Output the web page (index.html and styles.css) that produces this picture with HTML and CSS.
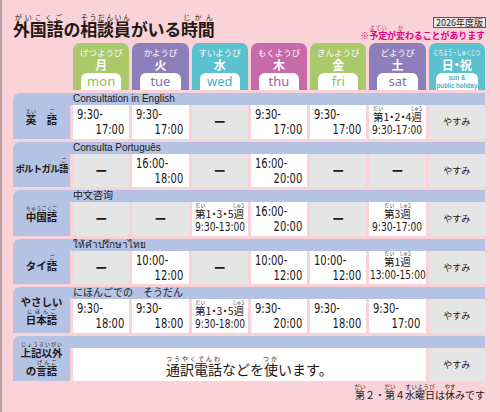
FILE: index.html
```html
<!DOCTYPE html>
<html lang="ja">
<head>
	<meta charset="utf-8">
	<title>外国語の相談員がいる時間</title>
	<link rel="stylesheet" href="styles.css">
</head>
<body>
<div class="page">
	<div class="top">
		<h1 class="title"><ruby>外国語<rt>がいこくご</rt></ruby>の<ruby>相談員<rt>そうだんいん</rt></ruby>がいる<ruby>時間<rt>じかん</rt></ruby></h1>
		<div class="meta">
			<span class="edition">2026年度版</span>
			<p class="notice">※<ruby>予定<rt>よてい</rt></ruby>が<ruby>変<rt>か</rt></ruby>わることがあります</p>
		</div>
	</div>

	<div class="days">
		<div></div>
		<div class="day green"><span class="day-kana">げつようび</span><span class="day-kanji">月</span><span class="day-en">mon</span></div>
		<div class="day purple"><span class="day-kana">かようび</span><span class="day-kanji">火</span><span class="day-en">tue</span></div>
		<div class="day teal"><span class="day-kana">すいようび</span><span class="day-kanji">水</span><span class="day-en">wed</span></div>
		<div class="day magenta"><span class="day-kana">もくようび</span><span class="day-kanji">木</span><span class="day-en">thu</span></div>
		<div class="day green"><span class="day-kana">きんようび</span><span class="day-kanji">金</span><span class="day-en">fri</span></div>
		<div class="day purple"><span class="day-kana">どようび</span><span class="day-kanji">土</span><span class="day-en">sat</span></div>
		<div class="day teal"><span class="day-kana small">にちよう・しゅくじつ</span><span class="day-kanji">日・祝</span><span class="day-en holiday"><span class="squeeze">sun &amp;<br>public holiday</span></span></div>
	</div>

	<div class="schedule">
		<!-- English -->
		<div class="row">
			<div class="lang"><div><ruby>英<rt>えい</rt></ruby>　<ruby>語<rt>ご</rt></ruby></div></div>
			<div class="caption">Consultation in English</div>
			<div class="cells">
				<div class="cell time"><span>9:30-</span><span class="end">17:00</span></div>
				<div class="cell time"><span>9:30-</span><span class="end">17:00</span></div>
				<div class="cell off"><span class="dash">ー</span></div>
				<div class="cell time"><span>9:30-</span><span class="end">17:00</span></div>
				<div class="cell time"><span>9:30-</span><span class="end">17:00</span></div>
				<div class="cell week"><span class="week-name"><ruby>第<rt>だい</rt></ruby>1・2・4<ruby>週<rt>しゅう</rt></ruby></span><span class="week-time">9:30-17:00</span></div>
				<div class="cell off"><span class="rest">やすみ</span></div>
			</div>
		</div>

		<!-- Portuguese -->
		<div class="row">
			<div class="lang"><div class="narrow">ポルトガル<ruby>語<rt>ご</rt></ruby></div></div>
			<div class="caption">Consulta Português</div>
			<div class="cells">
				<div class="cell off"><span class="dash">ー</span></div>
				<div class="cell time"><span>16:00-</span><span class="end">18:00</span></div>
				<div class="cell off"><span class="dash">ー</span></div>
				<div class="cell time"><span>16:00-</span><span class="end">20:00</span></div>
				<div class="cell off"><span class="dash">ー</span></div>
				<div class="cell off"><span class="dash">ー</span></div>
				<div class="cell off"><span class="rest">やすみ</span></div>
			</div>
		</div>

		<!-- Chinese -->
		<div class="row">
			<div class="lang"><div><ruby>中国語<rt>ちゅうごくご</rt></ruby></div></div>
			<div class="caption">中文咨询</div>
			<div class="cells">
				<div class="cell off"><span class="dash">ー</span></div>
				<div class="cell off"><span class="dash">ー</span></div>
				<div class="cell week"><span class="week-name"><ruby>第<rt>だい</rt></ruby>1・3・5<ruby>週<rt>しゅう</rt></ruby></span><span class="week-time">9:30-13:00</span></div>
				<div class="cell time"><span>16:00-</span><span class="end">20:00</span></div>
				<div class="cell off"><span class="dash">ー</span></div>
				<div class="cell week"><span class="week-name"><ruby>第<rt>だい</rt></ruby>3<ruby>週<rt>しゅう</rt></ruby></span><span class="week-time">9:30-17:00</span></div>
				<div class="cell off"><span class="rest">やすみ</span></div>
			</div>
		</div>

		<!-- Thai -->
		<div class="row">
			<div class="lang"><div>タイ<ruby>語<rt>ご</rt></ruby></div></div>
			<div class="caption">ให้คำปรึกษาไทย</div>
			<div class="cells">
				<div class="cell off"><span class="dash">ー</span></div>
				<div class="cell time"><span>10:00-</span><span class="end">12:00</span></div>
				<div class="cell off"><span class="dash">ー</span></div>
				<div class="cell time"><span>10:00-</span><span class="end">12:00</span></div>
				<div class="cell time"><span>10:00-</span><span class="end">12:00</span></div>
				<div class="cell week"><span class="week-name"><ruby>第<rt>だい</rt></ruby>1<ruby>週<rt>しゅう</rt></ruby></span><span class="week-time">13:00-15:00</span></div>
				<div class="cell off"><span class="rest">やすみ</span></div>
			</div>
		</div>

		<!-- Easy Japanese -->
		<div class="row">
			<div class="lang"><div class="two-line">やさしい<br><ruby>日本語<rt>にほんご</rt></ruby></div></div>
			<div class="caption">にほんごでの　そうだん</div>
			<div class="cells">
				<div class="cell time"><span>9:30-</span><span class="end">18:00</span></div>
				<div class="cell time"><span>9:30-</span><span class="end">18:00</span></div>
				<div class="cell week"><span class="week-name"><ruby>第<rt>だい</rt></ruby>1・3・5<ruby>週<rt>しゅう</rt></ruby></span><span class="week-time">9:30-18:00</span></div>
				<div class="cell time"><span>9:30-</span><span class="end">20:00</span></div>
				<div class="cell time"><span>9:30-</span><span class="end">18:00</span></div>
				<div class="cell time"><span>9:30-</span><span class="end">17:00</span></div>
				<div class="cell off"><span class="rest">やすみ</span></div>
			</div>
		</div>

		<!-- Other languages -->
		<div class="row">
			<div class="lang"><div class="two-line"><ruby>上記以外<rt>じょうきいがい</rt></ruby><br>の<ruby>言語<rt>げんご</rt></ruby></div></div>
			<div class="caption"></div>
			<div class="cells">
				<div class="cell wide"><span><ruby>通訳電話<rt>つうやくでんわ</rt></ruby>などを<ruby>使<rt>つか</rt></ruby>います。</span></div>
				<div class="cell off"><span class="rest">やすみ</span></div>
			</div>
		</div>
	</div>

	<p class="foot"><ruby>第<rt>だい</rt></ruby>２・<ruby>第<rt>だい</rt></ruby>４<ruby>水曜日<rt>すいようび</rt></ruby>は<ruby>休<rt>やす</rt></ruby>みです</p>
</div>
</body>
</html>
```

FILE: styles.css
```css
html, body {
	margin: 0;
	padding: 0;
}

body {
	width: 500px;
	height: 412px;
	box-sizing: border-box;
	background: #f9d3d8;
	border-left: 2px solid #b9a2a6;
	color: #231815;
	font-family: "Noto Sans CJK JP", "Noto Sans", sans-serif;
	overflow: hidden;
}

.page {
	padding: 0 15px 0 11px;
}

rt {
	font-size: 6px;
	line-height: 1;
	font-weight: normal;
}

/* title and notes */

.top {
	display: flex;
	justify-content: space-between;
	align-items: flex-end;
	height: 41px;
}

.title {
	margin: 0 0 2px;
	font-size: 17px;
	font-weight: bold;
	line-height: 20px;
	letter-spacing: -0.2px;
}

.title rt {
	font-size: 7px;
}

.meta {
	align-self: flex-start;
	display: flex;
	flex-direction: column;
	align-items: flex-end;
	padding-top: 17px;
}

.edition {
	font-size: 9px;
	line-height: 9px;
	padding: 0 2px;
	border: 1px solid #555;
	background: #f4ecec;
	margin-right: -1px;
}

.notice {
	margin: -3px 0 0;
	font-size: 9px;
	line-height: 12px;
	font-weight: bold;
	color: #e4007f;
	letter-spacing: -0.1px;
}

.notice rt {
	font-size: 5.5px;
	letter-spacing: 0;
}

/* day headers */

.days {
	display: grid;
	grid-template-columns: 57px repeat(7, 1fr);
	grid-template-rows: 47px;
	column-gap: 3px;
	margin-top: 2px;
}

.day {
	display: flex;
	flex-direction: column;
	align-items: center;
	border-radius: 7px 7px 0 0;
	padding-top: 4px;
	color: #fff;
	overflow: hidden;
	white-space: nowrap;
}

.day-kana {
	font-size: 8.5px;
	line-height: 11px;
	height: 11px;
}

.day-kana.small {
	font-size: 7px;
	transform: scaleX(0.66);
}

.day-kanji {
	font-size: 12px;
	font-weight: bold;
	line-height: 14px;
	height: 14px;
	font-feature-settings: "palt";
}

.day-en {
	margin-top: auto;
	width: calc(100% - 16px);
	height: 17px;
	background: #fff;
	border-radius: 6px 6px 0 0;
	text-align: center;
	font-family: "Noto Sans", sans-serif;
	font-size: 13px;
	line-height: 17px;
}

.day-en.holiday {
	display: flex;
	justify-content: center;
	width: calc(100% - 14px);
	font-family: "Liberation Sans", sans-serif;
	font-size: 8px;
	font-weight: bold;
	line-height: 8px;
	padding-top: 1px;
	box-sizing: border-box;
}

.squeeze {
	flex-shrink: 0;
	transform: scaleX(0.76);
}

.green { background: #a9c96b; }
.green .day-en { color: #97bd55; }
.purple { background: #8d7fba; }
.purple .day-en { color: #7e6fae; }
.teal { background: #5cc1cf; }
.teal .day-en { color: #43b4c4; }
.magenta { background: #c76aaa; }
.magenta .day-en { color: #b75a9b; }

/* schedule rows */

.schedule {
	display: flex;
	flex-direction: column;
	gap: 3px;
	margin-top: 3px;
}

.row {
	display: grid;
	grid-template-columns: 57px 1fr;
	grid-template-rows: 12px 33.5px;
	background: #b4c3e4;
	border-radius: 7px 0 0 0;
}

.lang {
	grid-row: 1 / 3;
	display: flex;
	align-items: center;
	justify-content: center;
	text-align: center;
	font-size: 10.5px;
	font-weight: bold;
	line-height: 13px;
	padding-top: 3px;
	white-space: nowrap;
}

.lang rt {
	font-size: 5px;
}

.lang .narrow {
	font-size: 9.5px;
	letter-spacing: -0.8px;
}

.lang .two-line {
	line-height: 14px;
	padding-top: 0;
}

.caption {
	padding-left: 3px;
	font-family: "Liberation Sans", "Noto Sans CJK JP", "DejaVu Sans", sans-serif;
	font-size: 10px;
	line-height: 12px;
	white-space: nowrap;
}

.cells {
	display: grid;
	grid-template-columns: repeat(7, 1fr);
	grid-template-rows: 33.5px;
	column-gap: 3px;
	padding-left: 3px;
	background: #f9d3d8;
}

.cell {
	background: #fff;
	display: flex;
	flex-direction: column;
	min-width: 0;
	white-space: nowrap;
}

.cell.off {
	background: #e5e5e5;
	align-items: center;
	justify-content: center;
}

.cell.time {
	font-family: "DejaVu Sans Condensed", "DejaVu Sans", sans-serif;
	font-size: 13.5px;
	line-height: 15px;
	padding: 2px 5px 0 4px;
}

.cell.time span {
	transform: scaleX(0.82);
	transform-origin: left center;
}

.cell.time .end {
	text-align: right;
	transform-origin: right center;
}

.dash {
	font-size: 12px;
	font-weight: bold;
}

.rest {
	font-size: 9px;
}

.cell.week {
	align-items: center;
	justify-content: flex-end;
	padding-bottom: 2px;
}

.week-name {
	font-size: 10.5px;
	line-height: 12px;
	font-feature-settings: "palt";
}

.week-name rt {
	font-size: 4.5px;
}

.week-time {
	font-family: "DejaVu Sans Condensed", "DejaVu Sans", sans-serif;
	font-size: 13px;
	line-height: 14px;
	transform: scaleX(0.78);
}

.cell.wide {
	grid-column: span 6;
	align-items: center;
	justify-content: flex-end;
	padding-bottom: 3px;
	font-size: 14px;
	line-height: 17px;
}

.cell.wide rt {
	font-size: 6px;
	letter-spacing: 2px;
}

/* footer */

.foot {
	margin: 3px 0 0;
	text-align: right;
	font-size: 10px;
	line-height: 13px;
}

.foot rt {
	font-size: 5.5px;
}
```
